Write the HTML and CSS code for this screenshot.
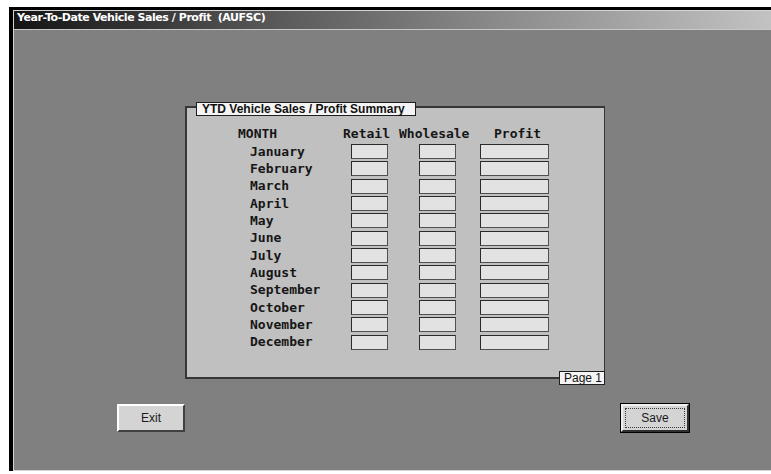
FILE: index.html
```html
<!DOCTYPE html>
<html>
<head>
<meta charset="utf-8">
<title>Year-To-Date Vehicle Sales / Profit</title>
<link rel="stylesheet" href="styles.css">
</head>
<body>
<div class="window">
  <div class="frame">
    <div class="titlebar">Year-To-Date Vehicle Sales / Profit&nbsp; (AUFSC)</div>
    <div class="client">
      <div class="group">
        <div class="group-title">YTD Vehicle Sales / Profit Summary</div>
        <div class="head-row">
          <span class="h-month">MONTH</span>
          <span class="h-retail">Retail</span>
          <span class="h-whole">Wholesale</span>
          <span class="h-profit">Profit</span>
        </div>
        <div class="rows">
          <div class="row"><span class="m">January</span><span class="box b-retail"></span><span class="box b-whole"></span><span class="box b-profit"></span></div>
          <div class="row"><span class="m">February</span><span class="box b-retail"></span><span class="box b-whole"></span><span class="box b-profit"></span></div>
          <div class="row"><span class="m">March</span><span class="box b-retail"></span><span class="box b-whole"></span><span class="box b-profit"></span></div>
          <div class="row"><span class="m">April</span><span class="box b-retail"></span><span class="box b-whole"></span><span class="box b-profit"></span></div>
          <div class="row"><span class="m">May</span><span class="box b-retail"></span><span class="box b-whole"></span><span class="box b-profit"></span></div>
          <div class="row"><span class="m">June</span><span class="box b-retail"></span><span class="box b-whole"></span><span class="box b-profit"></span></div>
          <div class="row"><span class="m">July</span><span class="box b-retail"></span><span class="box b-whole"></span><span class="box b-profit"></span></div>
          <div class="row"><span class="m">August</span><span class="box b-retail"></span><span class="box b-whole"></span><span class="box b-profit"></span></div>
          <div class="row"><span class="m">September</span><span class="box b-retail"></span><span class="box b-whole"></span><span class="box b-profit"></span></div>
          <div class="row"><span class="m">October</span><span class="box b-retail"></span><span class="box b-whole"></span><span class="box b-profit"></span></div>
          <div class="row"><span class="m">November</span><span class="box b-retail"></span><span class="box b-whole"></span><span class="box b-profit"></span></div>
          <div class="row"><span class="m">December</span><span class="box b-retail"></span><span class="box b-whole"></span><span class="box b-profit"></span></div>
        </div>
        <div class="page-tag">Page 1</div>
      </div>
      <div class="buttons">
        <button class="btn btn-exit">Exit</button>
        <button class="btn btn-save"><span class="focus">Save</span></button>
      </div>
    </div>
  </div>
</div>
</body>
</html>
```

FILE: styles.css
```css
html, body {
  margin: 0;
  padding: 0;
  background: #ffffff;
  overflow: hidden;
}

.window {
  margin: 7px 0 0 9px;
  border-top: 3px solid #000;
  border-left: 4px solid #000;
  height: 464px;
  box-sizing: border-box;
}

.frame {
  border-top: 1px solid #d4d4d4;
  border-left: 1px solid #d4d4d4;
  border-bottom: 1px solid #d4d4d4;
  height: 100%;
  box-sizing: border-box;
  display: flex;
  flex-direction: column;
}

.titlebar {
  height: 18px;
  line-height: 19px;
  padding-left: 3px;
  border-bottom: 1px solid #c8c8c8;
  background: linear-gradient(to right, #141414 0%, #5a5a5a 35%, #8c8c8c 65%, #c2c2c2 100%);
  color: #fff;
  font: bold 11px "DejaVu Sans", sans-serif;
  letter-spacing: -0.45px;
  white-space: nowrap;
}

.client {
  flex: 1;
  background: #808080;
  display: flex;
  flex-direction: column;
}

/* group box with the monthly grid */
.group {
  position: relative;
  margin: 76px 0 0 171px;
  width: 420px;
  height: 273px;
  box-sizing: border-box;
  background: #c0c0c0;
  border: 2px solid #363636;
  border-right-width: 1px;
}

.group-title {
  width: fit-content;
  margin: -6px 0 0 9px;
  height: 14px;
  box-sizing: border-box;
  padding: 0 10px 0 5px;
  background: #f4f4f4;
  border: 1px solid #1e1e1e;
  font: bold 12px "Liberation Sans", Arial, sans-serif;
  line-height: 12px;
  color: #111;
}

.head-row,
.row {
  font: bold 13px "DejaVu Sans Mono", "Liberation Mono", monospace;
  color: #161616;
  white-space: nowrap;
}

.head-row {
  display: flex;
  margin: 10px 0 0 51px;
  height: 16px;
  line-height: 16px;
}

.h-month { width: 105px; }
.h-retail { width: 56px; }
.h-whole { width: 95px; }

.rows {
  margin: 1px 0 0 0;
}

.row {
  display: flex;
  align-items: center;
  height: 17.33px;
  padding-left: 63px;
}

.m {
  width: 101px;
  line-height: 16px;
}

.box {
  height: 15px;
  box-sizing: border-box;
  background: #e2e2e2;
  border: 1px solid #2a2a2a;
  border-right-color: #505050;
  border-bottom-color: #505050;
}

.b-retail { width: 37px; }
.b-whole { width: 37px; margin-left: 31px; }
.b-profit { width: 69px; margin-left: 24px; }

/* page label sits across the bottom edge of the group box */
.page-tag {
  position: absolute;
  right: -1px;
  bottom: -8px;
  height: 14px;
  box-sizing: border-box;
  padding: 0 2px 0 4px;
  background: #f4f4f4;
  border: 1px solid #1e1e1e;
  font: 12px "Liberation Sans", Arial, sans-serif;
  line-height: 12px;
  color: #111;
  white-space: nowrap;
}

.buttons {
  display: flex;
  margin-top: 25px;
}

.btn {
  width: 68px;
  height: 28px;
  box-sizing: border-box;
  margin: 0;
  padding: 0;
  background: #d4d4d4;
  border: 2px solid;
  border-color: #ffffff #404040 #404040 #ffffff;
  font: 12px "Liberation Sans", Arial, sans-serif;
  color: #1a1a1a;
}

.btn-exit {
  margin-left: 103px;
}

.btn-save {
  margin-left: 436px;
  outline: 1px solid #000;
  outline-offset: 0;
  border-color: #f0f0f0 #303030 #303030 #f0f0f0;
  padding: 2px;
}

.focus {
  display: flex;
  align-items: center;
  justify-content: center;
  height: 100%;
  box-sizing: border-box;
  border: 1px dotted #3a3a3a;
}
```
